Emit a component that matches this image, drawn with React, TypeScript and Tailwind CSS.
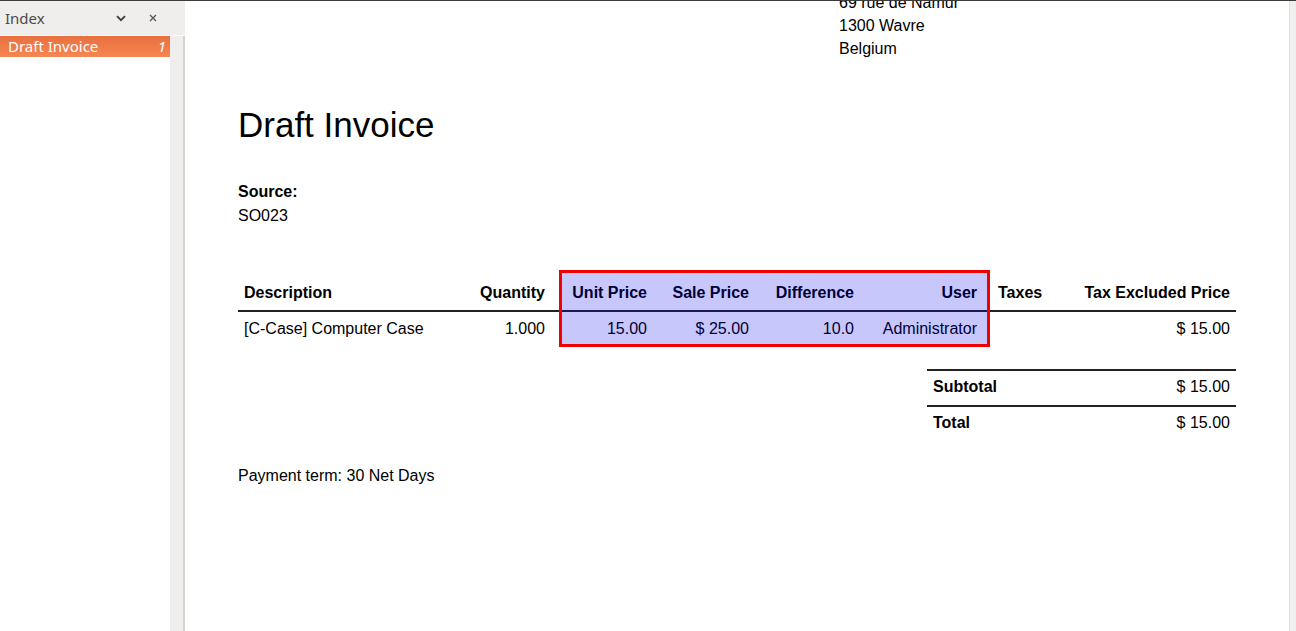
import React from 'react';

const font = { fontFamily: '"Liberation Sans", Arial, sans-serif' };

function Sidebar() {
  return (
    <div className="flex w-[185px] shrink-0 flex-col bg-[#efeeec]" style={{ fontFamily: '"Noto Sans", "Open Sans", sans-serif' }}>
      <div className="flex h-[35px] items-center border-b border-[#fbfbfa] pl-[5px] pr-[28px] text-[15px] text-[#4a4a4a]">
        <span>Index</span>
        <svg className="ml-auto mr-[23px]" width="10" height="7" viewBox="0 0 10 7">
          <path d="M1 1.2 L5 5.2 L9 1.2" fill="none" stroke="#3c3c3c" strokeWidth="1.8" />
        </svg>
        <svg width="8" height="8" viewBox="0 0 8 8">
          <path d="M1 1 L7 7 M7 1 L1 7" stroke="#555" strokeWidth="1.3" />
        </svg>
      </div>
      <div className="flex flex-1">
        <div className="w-[170px] bg-white">
          <div className="flex h-[21px] items-center bg-gradient-to-b from-[#e8703f] to-[#f68652] pl-[8px] pr-[4px] text-[15px] text-white">
            <span>Draft Invoice</span>
            <span className="ml-auto italic">1</span>
          </div>
        </div>
        <div className="flex-1 bg-[#efeeec]" />
        <div className="w-[2px] bg-[#d6d4d1]" />
      </div>
    </div>
  );
}

function Overlay() {
  return (
    <div className="pointer-events-none absolute left-[321px] top-0 h-[77px] w-[431px] border-[3px] border-[#f00000] bg-[rgba(0,0,240,0.22)]" />
  );
}

export default function App() {
  const th = 'h-[40px] pt-[13px] pb-[7px] font-bold leading-[20px]';
  const td = 'pt-[7px] pb-[8px] leading-[20px]';
  const sumRow = 'flex border-t-2 border-[#222] pb-[8px] pl-[6px] pr-[6px] pt-[6px] leading-[20px]';
  return (
    <div className="flex h-[631px] w-[1296px] flex-col overflow-hidden bg-white">
      <div className="h-[1px] shrink-0 bg-[#3c3b37]" />
      <div className="flex min-h-0 flex-1">
        <Sidebar />
        <div className="relative flex-1 overflow-hidden bg-white text-[16px] text-black" style={font}>
          <div className="ml-[53px] w-[998px]">
            <div className="mt-[-10px] pl-[601px] leading-[23px]">
              <div>69 rue de Namur</div>
              <div>1300 Wavre</div>
              <div>Belgium</div>
            </div>
            <h1 className="mt-[45px] text-[35px] leading-[40px]">Draft Invoice</h1>
            <div className="mt-[35px] leading-[24px]">
              <div className="font-bold">Source:</div>
              <div>SO023</div>
            </div>
            <div className="relative mt-[42px]">
              <table className="w-[998px] table-fixed border-collapse">
                <colgroup>
                  <col className="w-[228px]" />
                  <col className="w-[85px]" />
                  <col className="w-[102px]" />
                  <col className="w-[102px]" />
                  <col className="w-[105px]" />
                  <col className="w-[123px]" />
                  <col className="w-[77px]" />
                  <col className="w-[176px]" />
                </colgroup>
                <thead>
                  <tr className="border-b-2 border-[#222]">
                    <th className={`${th} pl-[6px] text-left`}>Description</th>
                    <th className={`${th} pr-[6px] text-right`}>Quantity</th>
                    <th className={`${th} pr-[6px] text-right`}>Unit Price</th>
                    <th className={`${th} pr-[6px] text-right`}>Sale Price</th>
                    <th className={`${th} pr-[6px] text-right`}>Difference</th>
                    <th className={`${th} pr-[6px] text-right`}>User</th>
                    <th className={`${th} pl-[15px] text-left`}>Taxes</th>
                    <th className={`${th} pr-[6px] text-right`}>Tax Excluded Price</th>
                  </tr>
                </thead>
                <tbody>
                  <tr>
                    <td className={`${td} pl-[6px]`}>[C-Case] Computer Case</td>
                    <td className={`${td} pr-[6px] text-right`}>1.000</td>
                    <td className={`${td} pr-[6px] text-right`}>15.00</td>
                    <td className={`${td} pr-[6px] text-right`}>$ 25.00</td>
                    <td className={`${td} pr-[6px] text-right`}>10.0</td>
                    <td className={`${td} pr-[6px] text-right`}>Administrator</td>
                    <td className={td}></td>
                    <td className={`${td} pr-[6px] text-right`}>$ 15.00</td>
                  </tr>
                </tbody>
              </table>
              <Overlay />
            </div>
            <div className="ml-auto mt-[22px] w-[309px]">
              <div className={sumRow}>
                <span className="font-bold">Subtotal</span>
                <span className="ml-auto">$ 15.00</span>
              </div>
              <div className={sumRow}>
                <span className="font-bold">Total</span>
                <span className="ml-auto">$ 15.00</span>
              </div>
            </div>
            <div className="mt-[25px] leading-[20px]">Payment term: 30 Net Days</div>
          </div>
        </div>
        <div className="w-[7px] shrink-0 border-l border-[#e4e2df] bg-[#f1f0ee]" />
      </div>
    </div>
  );
}
